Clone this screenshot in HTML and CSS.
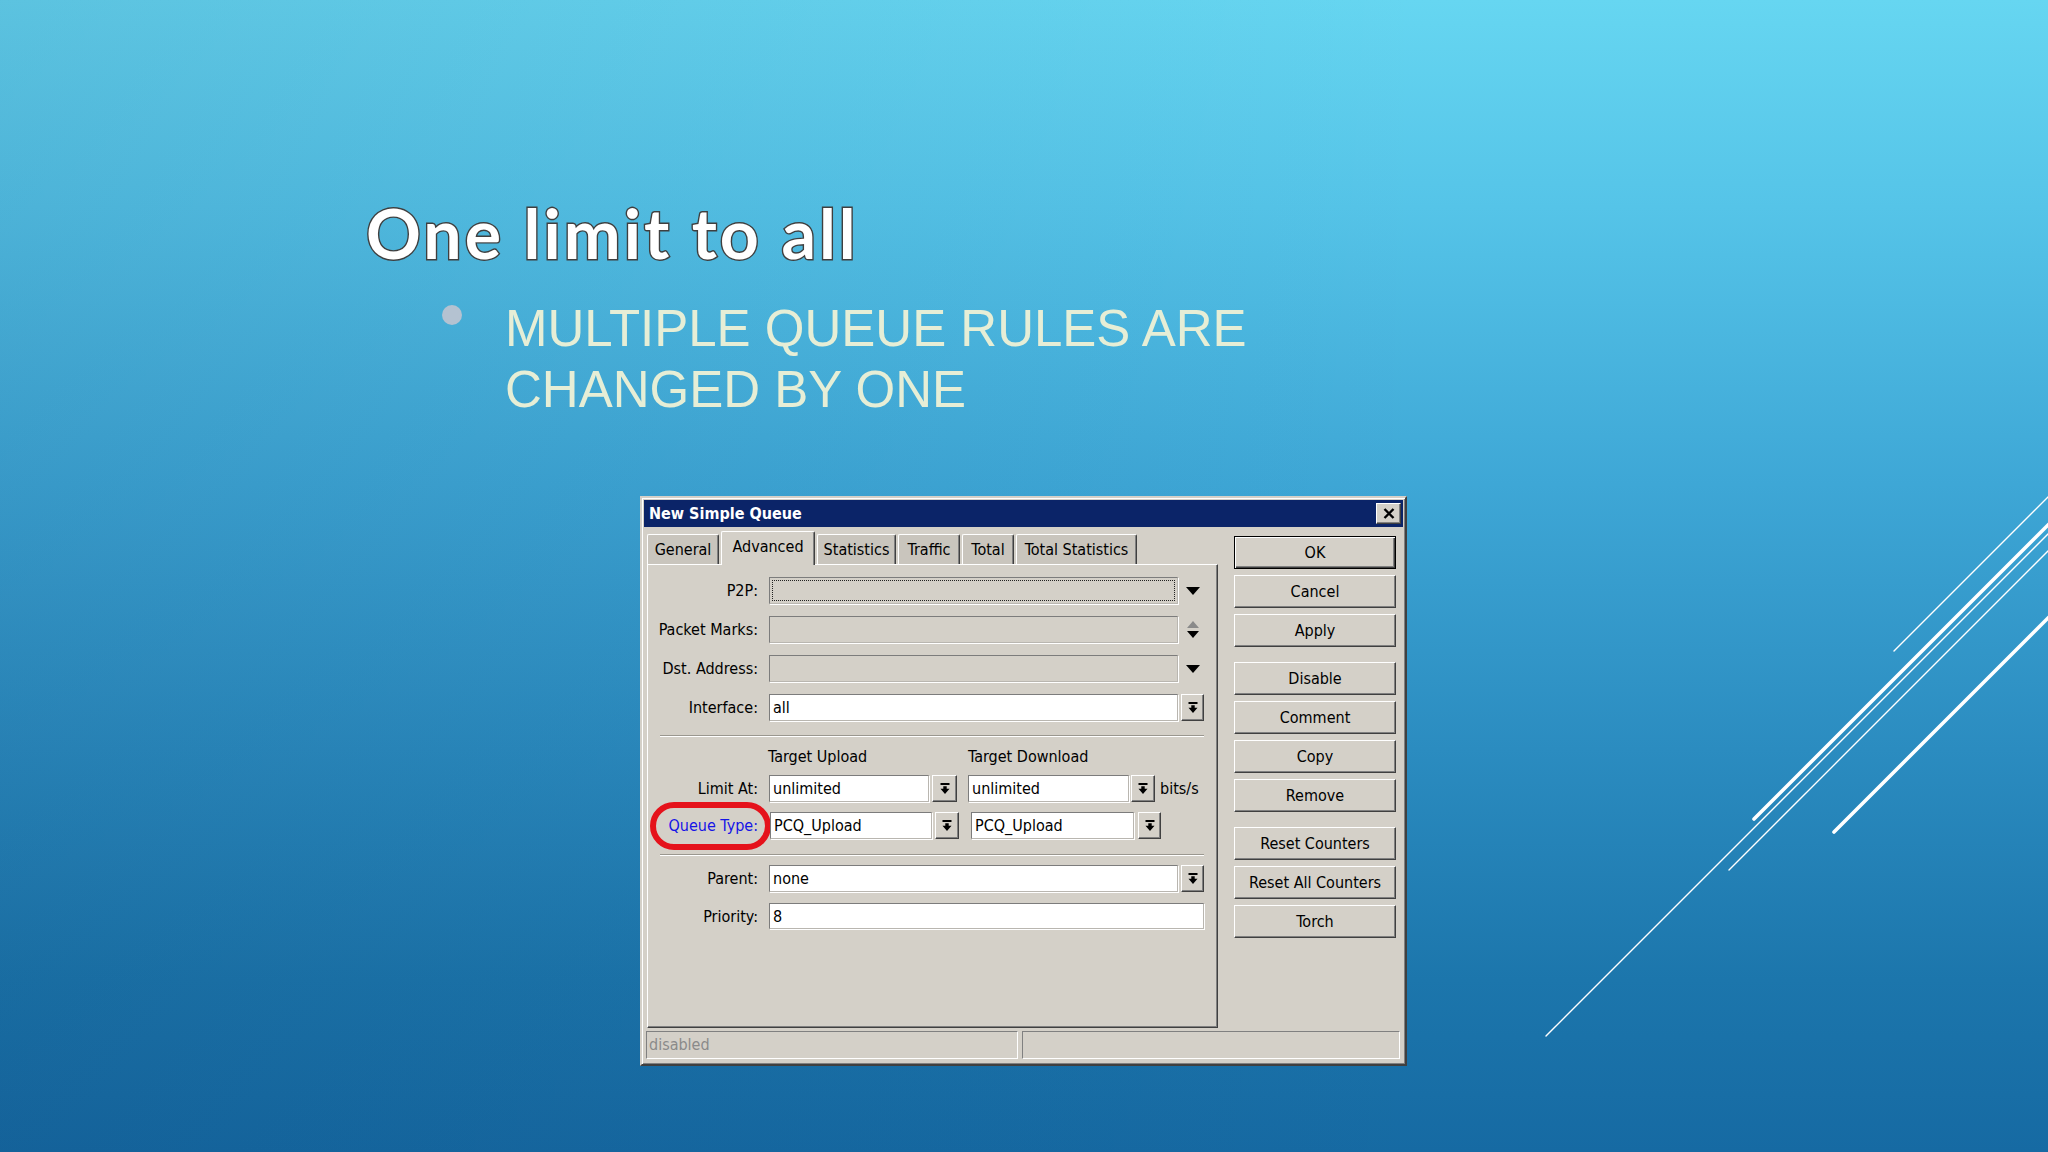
FILE: index.html
```html
<!DOCTYPE html>
<html lang="en">
<head>
<meta charset="utf-8">
<title>One limit to all</title>
<link rel="stylesheet" href="styles.css">
</head>
<body>
<div class="slide">
  <svg class="deco" viewBox="0 0 2048 1152" width="2048" height="1152" aria-hidden="true">
    <line x1="1894" y1="651" x2="2060" y2="485" class="thin"/>
    <line x1="1754" y1="819" x2="2060" y2="513" class="thick"/>
    <line x1="1546" y1="1036" x2="2060" y2="522" class="thin"/>
    <line x1="1729" y1="870" x2="2060" y2="539" class="thin"/>
    <line x1="1834" y1="832" x2="2060" y2="606" class="thick"/>
  </svg>

  <h1 class="title">One limit to all</h1>

  <ul class="bullets">
    <li><span class="dot"></span><span class="btext">MULTIPLE QUEUE RULES ARE CHANGED BY ONE</span></li>
  </ul>

  <div class="dialog">
    <div class="titlebar">
      <span class="caption">New Simple Queue</span>
      <span class="close"><svg width="12" height="11" viewBox="0 0 12 11"><path d="M1.5 1 L10.5 10 M10.5 1 L1.5 10" stroke="#000" stroke-width="2.4"/></svg></span>
    </div>

    <div class="dlg-body">
      <div class="tabcol">
        <div class="tabs">
          <div class="tab w-general">General</div>
          <div class="tab active w-advanced">Advanced</div>
          <div class="tab w-statistics">Statistics</div>
          <div class="tab w-traffic">Traffic</div>
          <div class="tab w-total">Total</div>
          <div class="tab w-totalstat">Total Statistics</div>
        </div>
        <div class="panel">
          <div class="row">
            <span class="lbl">P2P:</span>
            <span class="field disabled wide"><span class="focus"></span></span>
            <span class="dd"><svg width="14" height="8" viewBox="0 0 14 8"><polygon points="0,0 14,0 7,8" fill="#000"/></svg></span>
          </div>
          <div class="row mt12">
            <span class="lbl">Packet Marks:</span>
            <span class="field disabled wide"></span>
            <span class="dd updown">
              <svg width="12" height="7" viewBox="0 0 12 7"><polygon points="0,7 12,7 6,0" fill="#8a8a8a"/></svg>
              <svg width="12" height="7" viewBox="0 0 12 7"><polygon points="0,0 12,0 6,7" fill="#000"/></svg>
            </span>
          </div>
          <div class="row mt12">
            <span class="lbl">Dst. Address:</span>
            <span class="field disabled wide"></span>
            <span class="dd"><svg width="14" height="8" viewBox="0 0 14 8"><polygon points="0,0 14,0 7,8" fill="#000"/></svg></span>
          </div>
          <div class="row mt12">
            <span class="lbl">Interface:</span>
            <span class="field wide">all</span>
            <span class="abtn ml3 w23"><svg width="10" height="12" viewBox="0 0 10 12"><rect x="0.5" y="0" width="9" height="2" fill="#000"/><polygon points="3.3,3.3 6.7,3.3 6.7,5.8 9.5,5.8 5,11 0.5,5.8 3.3,5.8" fill="#000"/></svg></span>
          </div>

          <div class="sep sep1"></div>

          <div class="hdr">
            <span class="h1c">Target Upload</span>
            <span>Target Download</span>
          </div>

          <div class="row mt8">
            <span class="lbl">Limit At:</span>
            <span class="field w160">unlimited</span>
            <span class="abtn ml3 w25"><svg width="10" height="12" viewBox="0 0 10 12"><rect x="0.5" y="0" width="9" height="2" fill="#000"/><polygon points="3.3,3.3 6.7,3.3 6.7,5.8 9.5,5.8 5,11 0.5,5.8 3.3,5.8" fill="#000"/></svg></span>
            <span class="field w161 ml11">unlimited</span>
            <span class="abtn ml2 w24"><svg width="10" height="12" viewBox="0 0 10 12"><rect x="0.5" y="0" width="9" height="2" fill="#000"/><polygon points="3.3,3.3 6.7,3.3 6.7,5.8 9.5,5.8 5,11 0.5,5.8 3.3,5.8" fill="#000"/></svg></span>
            <span class="unit">bits/s</span>
          </div>

          <div class="row mt10 qt">
            <span class="mark"></span>
            <span class="lbl link">Queue Type:</span>
            <span class="field w162 ml1">PCQ_Upload</span>
            <span class="abtn ml3 w24"><svg width="10" height="12" viewBox="0 0 10 12"><rect x="0.5" y="0" width="9" height="2" fill="#000"/><polygon points="3.3,3.3 6.7,3.3 6.7,5.8 9.5,5.8 5,11 0.5,5.8 3.3,5.8" fill="#000"/></svg></span>
            <span class="field w163 ml12">PCQ_Upload</span>
            <span class="abtn ml4 w23"><svg width="10" height="12" viewBox="0 0 10 12"><rect x="0.5" y="0" width="9" height="2" fill="#000"/><polygon points="3.3,3.3 6.7,3.3 6.7,5.8 9.5,5.8 5,11 0.5,5.8 3.3,5.8" fill="#000"/></svg></span>
          </div>

          <div class="sep sep2"></div>

          <div class="row mt9">
            <span class="lbl">Parent:</span>
            <span class="field wide">none</span>
            <span class="abtn ml3 w23"><svg width="10" height="12" viewBox="0 0 10 12"><rect x="0.5" y="0" width="9" height="2" fill="#000"/><polygon points="3.3,3.3 6.7,3.3 6.7,5.8 9.5,5.8 5,11 0.5,5.8 3.3,5.8" fill="#000"/></svg></span>
          </div>
          <div class="row mt11 short">
            <span class="lbl">Priority:</span>
            <span class="field full">8</span>
          </div>
        </div>
      </div>

      <div class="btncol">
        <div class="btn default">OK</div>
        <div class="btn">Cancel</div>
        <div class="btn">Apply</div>
        <div class="btn group">Disable</div>
        <div class="btn">Comment</div>
        <div class="btn">Copy</div>
        <div class="btn">Remove</div>
        <div class="btn group">Reset Counters</div>
        <div class="btn">Reset All Counters</div>
        <div class="btn">Torch</div>
      </div>
    </div>

    <div class="statusbar">
      <div class="status s1">disabled</div>
      <div class="status s2"></div>
    </div>
  </div>
</div>
</body>
</html>
```

FILE: styles.css
```css
html, body {
  margin: 0;
  padding: 0;
}

body {
  width: 2048px;
  height: 1152px;
  overflow: hidden;
}

.slide {
  position: relative;
  width: 2048px;
  height: 1152px;
  box-sizing: border-box;
  padding-top: 193px;
  overflow: hidden;
  background:
    linear-gradient(to right, rgba(0, 25, 70, 0.10), rgba(0, 25, 70, 0) 70%),
    linear-gradient(to bottom, #66d6f1 0%, #55c4e8 18%, #3ea7d6 42%, #2b8cc0 65%, #1c76ac 85%, #166aa3 100%);
}

.deco {
  position: absolute;
  left: 0;
  top: 0;
  pointer-events: none;
}

.deco line {
  stroke: #ffffff;
  stroke-linecap: round;
}

.deco .thin {
  stroke-width: 1.4;
}

.deco .thick {
  stroke-width: 3.6;
}

.title {
  margin: 0;
  padding-left: 366px;
  font-family: Lato, "Open Sans", sans-serif;
  font-weight: 700;
  font-size: 68px;
  line-height: 80px;
  letter-spacing: 3px;
  color: #ffffff;
  -webkit-text-stroke: 2.8px #3f3f3f;
  paint-order: stroke fill;
}

.bullets {
  list-style: none;
  margin: 25px 0 0 0;
  padding: 0 0 0 442px;
}

.bullets li {
  display: flex;
  align-items: flex-start;
}

.dot {
  flex: none;
  width: 20px;
  height: 20px;
  border-radius: 50%;
  background: #b4c2d1;
  margin-top: 7px;
  margin-right: 43px;
}

.btext {
  width: 780px;
  font-family: "Liberation Sans", Arial, sans-serif;
  font-size: 51px;
  line-height: 61px;
  color: #e6eed6;
}

/* ---------- dialog ---------- */

.dialog {
  margin: 76px 0 0 640px;
  width: 767px;
  height: 570px;
  box-sizing: border-box;
  border: 2px solid;
  border-color: #d4d0c8 #404040 #404040 #d4d0c8;
  box-shadow: inset 1px 1px 0 #ffffff, inset -1px -1px 0 #808080;
  padding: 2px;
  background: #d4d0c8;
  font-family: "DejaVu Sans Condensed", "DejaVu Sans", sans-serif;
  font-stretch: condensed;
  font-size: 16px;
  color: #000;
}

.titlebar {
  height: 27px;
  background: #0b2468;
  display: flex;
  align-items: center;
  justify-content: space-between;
  padding: 0 2px 0 5px;
}

.caption {
  color: #ffffff;
  font-weight: 700;
  font-size: 16px;
  line-height: 27px;
}

.close {
  width: 25px;
  height: 21px;
  box-sizing: border-box;
  background: #d4d0c8;
  border: 1px solid;
  border-color: #ffffff #404040 #404040 #ffffff;
  box-shadow: inset -1px -1px 0 #808080;
  display: flex;
  align-items: center;
  justify-content: center;
}

.dlg-body {
  display: flex;
  height: 501px;
}

.tabcol {
  margin-left: 3px;
  width: 571px;
  display: flex;
  flex-direction: column;
}

.tabs {
  height: 37px;
  display: flex;
  align-items: flex-end;
  gap: 2px;
}

.tab {
  height: 30px;
  box-sizing: border-box;
  background: #c9c5bd;
  border: 1px solid;
  border-color: #ffffff #404040 transparent #ffffff;
  border-bottom: none;
  border-radius: 2px 2px 0 0;
  box-shadow: inset -1px 0 0 #808080;
  text-align: center;
  line-height: 29px;
  white-space: nowrap;
}

.tab.active {
  height: 34px;
  margin-bottom: -1px;
  background: #d4d0c8;
  line-height: 30px;
  position: relative;
  z-index: 1;
}

.w-general { width: 72px; }
.w-advanced { width: 94px; }
.w-statistics { width: 79px; }
.w-traffic { width: 62px; }
.w-total { width: 52px; }
.w-totalstat { width: 121px; }

.panel {
  height: 464px;
  box-sizing: border-box;
  border: 1px solid;
  border-color: #ffffff #404040 #404040 #ffffff;
  box-shadow: inset -1px -1px 0 #808080;
  padding-top: 12px;
}

.row {
  display: flex;
  align-items: center;
  height: 27px;
}

.row.short {
  height: 26px;
}

.row.qt {
  position: relative;
}

.mt8 { margin-top: 8px; }
.mt9 { margin-top: 9px; }
.mt10 { margin-top: 10px; }
.mt11 { margin-top: 11px; }
.mt12 { margin-top: 12px; }

.lbl {
  flex: none;
  width: 110px;
  margin-right: 11px;
  text-align: right;
  white-space: nowrap;
}

.lbl.link {
  color: #1414e6;
}

.field {
  flex: none;
  height: 100%;
  box-sizing: border-box;
  background: #ffffff;
  border: 1px solid;
  border-color: #7c7c7c #b9b6b0 #b9b6b0 #7c7c7c;
  box-shadow: 1px 1px 0 #ffffff;
  padding-left: 3px;
  line-height: 25px;
  white-space: nowrap;
  position: relative;
}

.field.disabled {
  background: #d4d0c8;
}

.focus {
  position: absolute;
  left: 2px;
  top: 2px;
  right: 2px;
  bottom: 2px;
  border: 1px dotted #222;
}

.wide { width: 409px; }
.full { width: 435px; }
.w160 { width: 160px; }
.w161 { width: 161px; }
.w162 { width: 162px; }
.w163 { width: 163px; }

.ml1 { margin-left: 1px; }
.ml2 { margin-left: 2px; }
.ml3 { margin-left: 3px; }
.ml4 { margin-left: 4px; }
.ml11 { margin-left: 11px; }
.ml12 { margin-left: 12px; }

.dd {
  flex: none;
  width: 23px;
  margin-left: 3px;
  display: flex;
  align-items: center;
  justify-content: center;
}

.dd.updown {
  flex-direction: column;
  gap: 3px;
}

.abtn {
  flex: none;
  height: 100%;
  box-sizing: border-box;
  background: #d4d0c8;
  border: 1px solid;
  border-color: #ffffff #404040 #404040 #ffffff;
  box-shadow: inset -1px -1px 0 #808080;
  display: flex;
  align-items: center;
  justify-content: center;
}

.w23 { width: 23px; }
.w24 { width: 24px; }
.w25 { width: 25px; }

.unit {
  margin-left: 5px;
  white-space: nowrap;
}

.sep {
  margin-left: 12px;
  width: 544px;
  border-top: 1px solid #9a978f;
  border-bottom: 1px solid #ffffff;
}

.sep1 { margin-top: 14px; }
.sep2 { margin-top: 15px; }

.hdr {
  margin-top: 10px;
  height: 20px;
  line-height: 20px;
  display: flex;
  white-space: nowrap;
}

.h1c {
  margin-left: 120px;
  width: 200px;
}

.mark {
  position: absolute;
  left: 2px;
  top: -10px;
  width: 121px;
  height: 48px;
  box-sizing: border-box;
  border: 6px solid #e5121b;
  border-radius: 24px;
}

.btncol {
  margin-left: 16px;
  width: 162px;
  padding-top: 9px;
  display: flex;
  flex-direction: column;
}

.btn {
  height: 33px;
  box-sizing: border-box;
  margin-top: 6px;
  border: 1px solid;
  border-color: #ffffff #404040 #404040 #ffffff;
  box-shadow: inset -1px -1px 0 #808080;
  text-align: center;
  line-height: 31px;
  white-space: nowrap;
}

.btn.default {
  margin-top: 0;
  border-color: #000;
  box-shadow: inset 1px 1px 0 #ffffff, inset -1px -1px 0 #404040, inset -2px -2px 0 #808080;
}

.btn.group {
  margin-top: 15px;
}

.statusbar {
  margin-top: 3px;
  height: 28px;
  display: flex;
  gap: 4px;
  padding: 0 3px 0 2px;
}

.status {
  height: 28px;
  box-sizing: border-box;
  border: 1px solid;
  border-color: #808080 #ffffff #ffffff #808080;
  color: #8a8a8a;
  line-height: 26px;
  padding-left: 2px;
}

.s1 { width: 372px; }
.s2 { flex: 1; }
```
